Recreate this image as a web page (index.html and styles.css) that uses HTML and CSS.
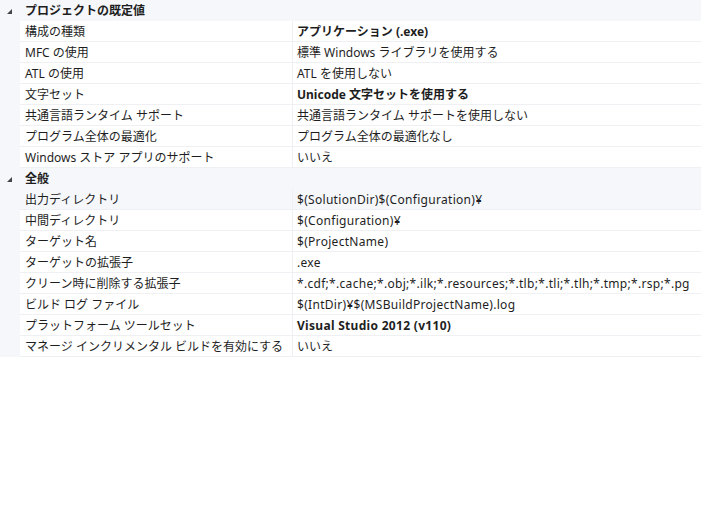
FILE: index.html
```html
<!DOCTYPE html>
<html lang="ja">
<head>
<meta charset="utf-8">
<link rel="stylesheet" href="styles.css">
</head>
<body>
<div class="grid">
  <div class="cat">
    <span class="gut"><svg class="tri" width="20" height="21" viewBox="0 0 20 21"><polygon points="12,9 12,14 7,14" fill="#454545"/></svg></span>
    <span class="cat-title">プロジェクトの既定値</span>
  </div>
  <div class="row"><span class="gut"></span><span class="name">構成の種類</span><span class="val b">アプリケーション (.exe)</span></div>
  <div class="row"><span class="gut"></span><span class="name">MFC の使用</span><span class="val">標準 Windows ライブラリを使用する</span></div>
  <div class="row"><span class="gut"></span><span class="name">ATL の使用</span><span class="val">ATL を使用しない</span></div>
  <div class="row"><span class="gut"></span><span class="name">文字セット</span><span class="val b">Unicode 文字セットを使用する</span></div>
  <div class="row"><span class="gut"></span><span class="name">共通言語ランタイム サポート</span><span class="val">共通言語ランタイム サポートを使用しない</span></div>
  <div class="row"><span class="gut"></span><span class="name">プログラム全体の最適化</span><span class="val">プログラム全体の最適化なし</span></div>
  <div class="row"><span class="gut"></span><span class="name">Windows ストア アプリのサポート</span><span class="val">いいえ</span></div>
  <div class="cat">
    <span class="gut"><svg class="tri" width="20" height="21" viewBox="0 0 20 21"><polygon points="12,9 12,14 7,14" fill="#454545"/></svg></span>
    <span class="cat-title">全般</span>
  </div>
  <div class="row sel"><span class="gut"></span><span class="name">出力ディレクトリ</span><span class="val lat">$(SolutionDir)$(Configuration)¥</span></div>
  <div class="row"><span class="gut"></span><span class="name">中間ディレクトリ</span><span class="val lat">$(Configuration)¥</span></div>
  <div class="row"><span class="gut"></span><span class="name">ターゲット名</span><span class="val lat">$(ProjectName)</span></div>
  <div class="row"><span class="gut"></span><span class="name">ターゲットの拡張子</span><span class="val lat">.exe</span></div>
  <div class="row"><span class="gut"></span><span class="name">クリーン時に削除する拡張子</span><span class="val lat">*.cdf;*.cache;*.obj;*.ilk;*.resources;*.tlb;*.tli;*.tlh;*.tmp;*.rsp;*.pg</span></div>
  <div class="row"><span class="gut"></span><span class="name">ビルド ログ ファイル</span><span class="val lat">$(IntDir)¥$(MSBuildProjectName).log</span></div>
  <div class="row"><span class="gut"></span><span class="name">プラットフォーム ツールセット</span><span class="val b lat">Visual Studio 2012 (v110)</span></div>
  <div class="row"><span class="gut"></span><span class="name">マネージ インクリメンタル ビルドを有効にする</span><span class="val">いいえ</span></div>
</div>
</body>
</html>
```

FILE: styles.css
```css
html, body {
  margin: 0;
  padding: 0;
  background: #ffffff;
}
body {
  font-family: "Noto Sans", "Noto Sans CJK JP", sans-serif;
  font-size: 12px;
  color: #1e1e1e;
}
.grid {
  display: flex;
  flex-direction: column;
  width: 701px;
  overflow: hidden;
}
.cat {
  display: flex;
  height: 21px;
  background: #f5f7fb;
  align-items: center;
}
.gut {
  flex: 0 0 20px;
  width: 20px;
  height: 100%;
  background: #f5f7fb;
  display: block;
}
.tri {
  display: block;
}
.cat-title {
  padding-left: 5px;
  padding-top: 1px;
  font-weight: bold;
  line-height: 20px;
  white-space: nowrap;
}
.row {
  display: flex;
  height: 21px;
  box-sizing: border-box;
}
.name {
  flex: 0 0 273px;
  box-sizing: border-box;
  padding-left: 5px;
  padding-top: 1px;
  line-height: 19px;
  border-bottom: 1px solid #eff0f4;
  border-right: 1px solid #eff0f4;
  white-space: nowrap;
  overflow: hidden;
}
.val {
  flex: 1 1 auto;
  min-width: 0;
  padding-left: 4px;
  padding-top: 1px;
  line-height: 19px;
  border-bottom: 1px solid #eff0f4;
  white-space: nowrap;
  overflow: hidden;
}
.lat {
  letter-spacing: 0.3px;
}
.b {
  font-weight: bold;
}
.sel .name,
.sel .val {
  background: #f5f7fb;
}
```
